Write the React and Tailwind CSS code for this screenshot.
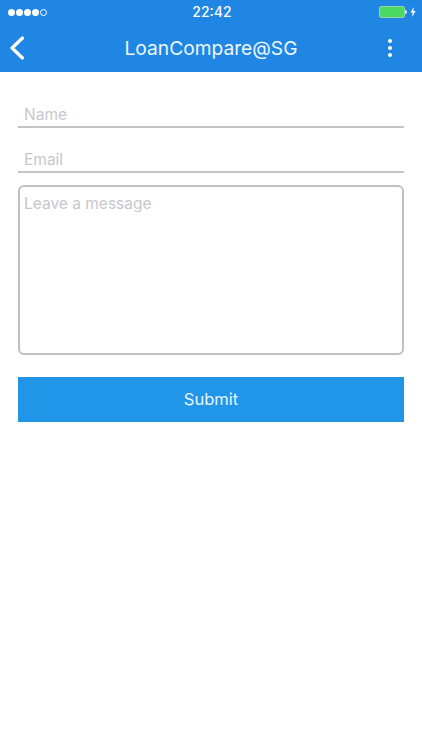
const font = "font-['Inter','Roboto','Liberation_Sans',sans-serif]";

function StatusBar() {
  return (
    <div className="flex h-6 items-center justify-between pl-2 pr-1.5">
      <div className="flex w-[100px] items-center gap-[1px]">
        <span className="h-[7px] w-[7px] rounded-full bg-white" />
        <span className="h-[7px] w-[7px] rounded-full bg-white" />
        <span className="h-[7px] w-[7px] rounded-full bg-white" />
        <span className="h-[7px] w-[7px] rounded-full bg-white" />
        <span className="h-[7px] w-[7px] rounded-full border border-white" />
      </div>
      <span className="text-[14px] font-medium leading-none text-white">22:42</span>
      <div className="flex w-[100px] items-center justify-end gap-[3px]">
        <div className="flex items-center">
          <div className="h-[12px] w-[26px] rounded-[2px] border border-[#9ad0a8] bg-[#4cd964]" />
          <div className="h-1 w-[1.5px] rounded-r-sm bg-white/80" />
        </div>
        <svg width="6" height="10" viewBox="0 0 6 10" fill="white">
          <path d="M3.8 0 0.4 5.6h2.2L2 10l3.6-6H3.3z" />
        </svg>
      </div>
    </div>
  );
}

function NavBar() {
  return (
    <div className="flex h-[48px] items-center justify-between">
      <button className="flex w-[64px] justify-start pl-[9px]">
        <svg width="16" height="24" viewBox="0 0 16 24" fill="none" stroke="white" strokeWidth="3.2" strokeLinecap="round" strokeLinejoin="round">
          <path d="M13.5 2 3 12l10.500 10" />
        </svg>
      </button>
      <h1 className="text-[19.200px] font-normal text-[#eef6fd]">LoanCompare@SG</h1>
      <button className="flex w-[64px] flex-col items-center gap-[2.500px]">
        <span className="h-[4.500px] w-[4.500px] rounded-full bg-white" />
        <span className="h-[4.500px] w-[4.500px] rounded-full bg-white" />
        <span className="h-[4.500px] w-[4.500px] rounded-full bg-white" />
      </button>
    </div>
  );
}

function Field({ label }) {
  return (
    <div className="flex h-[45px] items-end border-b-2 border-[#c4c4c4] px-1.5">
      <span className="text-[15.500px] leading-[22px] text-[#c7c7cd]">{label}</span>
    </div>
  );
}

export default function App() {
  return (
    <div className={`min-h-[750px] w-[422px] bg-white ${font}`}>
      <header className="h-[72px] bg-[#2086e4]">
        <StatusBar />
        <NavBar />
      </header>

      <main className="px-[18px] pt-[11px]">
        <Field label="Name" />
        <Field label="Email" />
        <div className="mt-[12px] h-[170px] rounded-[6px] border-2 border-[#c0c0c0] px-[4px] py-[6px]">
          <span className="block text-[15.500px] leading-[22px] text-[#c7c7cd]">Leave a message</span>
        </div>
        <button className="mt-[22px] flex h-[45px] w-full items-center justify-center bg-[#2196e9] pb-[1px] text-[16.500px] text-[#e6f4fd]">
          Submit
        </button>
      </main>
    </div>
  );
}
